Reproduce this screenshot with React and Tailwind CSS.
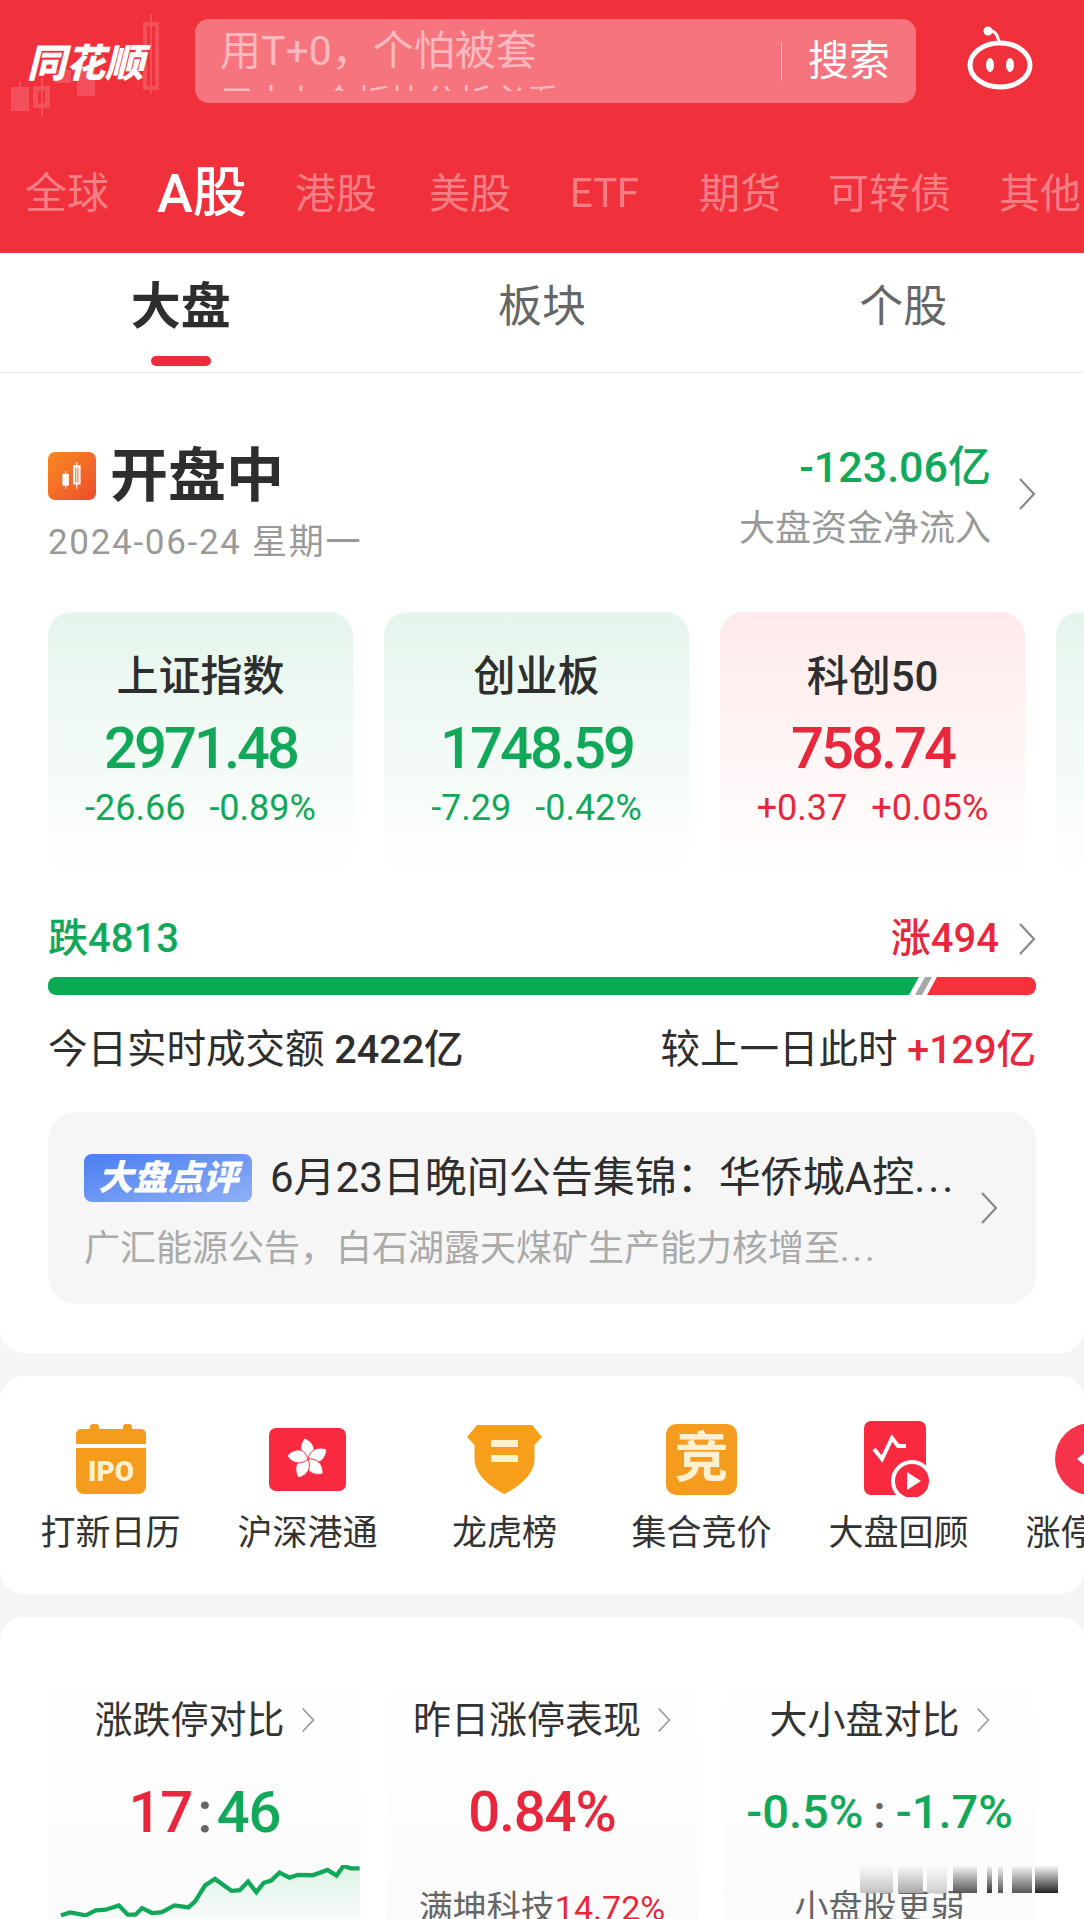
const tabs = [
  { name: "全球", cls: "w-[83px] text-[42px] text-white/40" },
  { name: "A股", cls: "w-[89px] text-[54px] font-medium text-white" },
  { name: "港股", cls: "w-[82px] text-[41px] text-white/40" },
  { name: "美股", cls: "w-[82px] text-[41px] ml-[3px] text-white/40" },
  { name: "ETF", cls: "w-[70px] text-[40px] mx-[10px] text-white/40" },
  { name: "期货", cls: "w-[80px] text-[41px] text-white/40" },
  { name: "可转债", cls: "w-[122px] text-[41px] text-white/40" },
  { name: "其他", cls: "w-[84px] text-[41px] text-white/40" },
];

const indexCards = [
  { title: "上证指数", value: "2971.48", a: "-26.66", b: "-0.89%", up: false },
  { title: "创业板", value: "1748.59", a: "-7.29", b: "-0.42%", up: false },
  { title: "科创50", value: "758.74", a: "+0.37", b: "+0.05%", up: true },
];

const linePoints =
  "60,352 88,343 135,352 165,337 195,335 235,322 262,350 285,350 305,330 335,345 365,342 403,322 445,328 465,310 495,262 525,242 575,278 600,276 625,250 650,282 672,254 695,247 720,223 750,238 775,230 820,231 865,215 892,232 913,203 935,210 962,210";

const Chevron = ({ className }) => (
  <svg viewBox="0 0 18 34" fill="none" stroke="currentColor" strokeWidth="2.2" className={className}>
    <path d="M2 2 L16 17 L2 32" />
  </svg>
);

const Candles = () => (
  <svg viewBox="0 0 160 125" className="absolute left-0 top-0 h-[125px] w-[160px]" fill="#fff">
    <g opacity="0.16">
      <rect x="11" y="87" width="18" height="24" />
      <rect x="19" y="82" width="2" height="6" />
      <path d="M33 86h17v22h-17z M38 91v12h7v-12z" fillRule="evenodd" />
      <rect x="41" y="78" width="2" height="38" />
      <rect x="55" y="70" width="16" height="13" />
      <rect x="77" y="66" width="18" height="30" />
      <path d="M143 22h16v68h-16z M147 26v60h8v-60z" fillRule="evenodd" />
      <rect x="150" y="14" width="2" height="80" />
    </g>
  </svg>
);

const Robot = () => (
  <svg viewBox="0 0 70 64" className="h-[64px] w-[70px]" fill="none">
    <path d="M23 5 C30 4 33 9 34 17" stroke="#fff" strokeWidth="3" />
    <circle cx="23" cy="5" r="4.5" fill="#fff" />
    <ellipse cx="35" cy="39" rx="30" ry="22" stroke="#fff" strokeWidth="5" />
    <ellipse cx="25" cy="39" rx="4" ry="7" fill="#fff" />
    <ellipse cx="45" cy="39" rx="4" ry="7" fill="#fff" />
  </svg>
);

const IpoIcon = () => (
  <svg viewBox="0 0 70 70" className="h-[70px] w-[70px]">
    <rect x="14" y="0" width="9" height="8" rx="3" fill="#f59c1e" />
    <rect x="47" y="0" width="9" height="8" rx="3" fill="#f59c1e" />
    <path d="M0 10 a5 5 0 0 1 5-5 h60 a5 5 0 0 1 5 5 v10 h-70z" fill="#f59c1e" />
    <path d="M0 24 h70 v38 a8 8 0 0 1-8 8 h-54 a8 8 0 0 1-8-8z" fill="#f59c1e" />
    <text x="35" y="57" textAnchor="middle" fontFamily="Roboto, sans-serif" fontWeight="900" fontSize="28" fill="#fff0d0">
      IPO
    </text>
  </svg>
);

const HkIcon = () => (
  <div className="flex h-[63px] w-[77px] items-center justify-center rounded-[7px] bg-[#f9293f]">
    <svg viewBox="-20 -20 40 40" className="h-[44px] w-[44px]" fill="#fff" stroke="#f9293f" strokeWidth="0.8">
      {[0, 72, 144, 216, 288].map((deg) => (
        <path key={deg} transform={`rotate(${deg})`} d="M0 0 C-7 -4 -9 -12 -3 -19 C4 -16 8 -9 4 -4 C3 -3 1 -1 0 0z" />
      ))}
    </svg>
  </div>
);

const ShieldIcon = () => (
  <svg viewBox="0 0 75 70" className="h-[70px] w-[75px]">
    <path d="M10 1 H65 L75 13 L67.5 21 V35 C67.5 52 48 65 37.5 70 C27 65 7.5 52 7.5 35 V21 L0 13z" fill="#f79f1b" />
    <rect x="24" y="16" width="27" height="7" fill="#fff0d0" />
    <rect x="24" y="31" width="27" height="7" fill="#fff0d0" />
  </svg>
);

const JingIcon = () => (
  <div className="flex h-[71px] w-[71px] items-center justify-center rounded-[10px] bg-[#f59c1e] text-[54px] leading-none font-bold text-[#fff0d0]">
    竞
  </div>
);

const ReviewIcon = () => (
  <svg viewBox="0 0 70 76" className="h-[76px] w-[70px]">
    <rect x="0" y="0" width="62" height="74" rx="7" fill="#f9293f" />
    <path d="M10 28 L18 38 L28 17 L34 25 L42 25" fill="none" stroke="#fff" strokeWidth="4" />
    <circle cx="48" cy="60" r="19" fill="#f9293f" stroke="#fff" strokeWidth="4" />
    <path d="M43 51 L57 60 L43 69z" fill="#fff" />
  </svg>
);

const LimitIcon = () => (
  <svg viewBox="0 0 72 72" className="h-[72px] w-[72px] -translate-x-[5px]">
    <circle cx="36" cy="36" r="36" fill="#f5334a" />
    <path d="M22 36 l12 -10 h20 v20 h-20z" fill="#fff" />
  </svg>
);

const shortcuts = [
  { label: "打新日历", icon: <IpoIcon /> },
  { label: "沪深港通", icon: <HkIcon /> },
  { label: "龙虎榜", icon: <ShieldIcon /> },
  { label: "集合竞价", icon: <JingIcon /> },
  { label: "大盘回顾", icon: <ReviewIcon /> },
  { label: "涨停复盘", icon: <LimitIcon /> },
];

const maskBars = [
  "w-[33px] to-[#c4c4c4]",
  "ml-[5px] w-[25px] to-[#a8a8a8]",
  "ml-[4px] w-[20px] to-[#d0d0d0]",
  "ml-[6px] w-[24px] to-[#555]",
  "ml-[10px] w-[5px] to-[#333]",
  "ml-[6px] w-[5px] to-[#555]",
  "ml-[9px] w-[20px] to-[#555]",
  "ml-[3px] w-[23px] to-[#222]",
];

export default function App() {
  return (
    <div className="relative h-[1919px] w-[1084px] overflow-hidden bg-[#f5f5f5] font-['Roboto','Noto_Sans_CJK_SC',sans-serif]">
      <header className="relative h-[253px] bg-[#f0303b]">
        <Candles />
        <div className="relative flex h-[124px] items-start">
          <div className="mt-[36px] ml-[27px] w-[168px] text-[39px] leading-[56px] font-black text-white italic">同花顺</div>
          <div className="mt-[19px] flex h-[84px] w-[721px] items-center rounded-[14px] bg-[#f6747d]">
            <div className="ml-[25px] flex h-full flex-1 flex-col overflow-hidden">
              <div className="mt-[6px] text-[41px] leading-[52px] text-white/50">用T+0，个怕被套</div>
              <div className="mt-[8px] h-[6px] overflow-hidden text-[34px] leading-[34px] whitespace-nowrap text-white/50">三十七个板块分析必看</div>
            </div>
            <div className="h-[39px] w-px bg-white/60"></div>
            <div className="ml-[26px] w-[108px] text-[41px] leading-none text-white">搜索</div>
          </div>
          <div className="mt-[26px] ml-[49px]">
            <Robot />
          </div>
        </div>
        <nav className="relative mt-[25px] flex h-[90px] items-center gap-[49px] pl-[25px] whitespace-nowrap">
          {tabs.map((tab) => (
            <div key={tab.name} className={`shrink-0 leading-none ${tab.cls}`}>
              {tab.name}
            </div>
          ))}
        </nav>
      </header>

      <section className="rounded-b-[24px] bg-white pb-[49px]">
        <div className="grid h-[120px] grid-cols-3 border-b border-[#ececec] text-center">
          <div className="relative pt-[25px] text-[50px] leading-[58px] font-bold text-[#2e2e2e]">
            大盘
            <div className="absolute bottom-[6px] left-[151px] h-[10px] w-[60px] rounded-full bg-[#ec2b3c]"></div>
          </div>
          <div className="pt-[25px] text-[44px] leading-[58px] text-[#666]">板块</div>
          <div className="pt-[25px] text-[44px] leading-[58px] text-[#666]">个股</div>
        </div>

        <div className="flex items-start justify-between pt-[68px] pr-[48px] pl-[48px]">
          <div>
            <div className="flex items-center gap-[14px]">
              <div className="flex h-[48px] w-[48px] items-center justify-center rounded-[7px] bg-linear-to-br from-[#f98a1f] to-[#ec4a2b]">
                <svg viewBox="0 0 28 28" className="h-[30px] w-[30px]" fill="#fff">
                  <rect x="5" y="12" width="6" height="11" />
                  <rect x="7.5" y="9" width="1" height="17" />
                  <path d="M15 4h7v18h-7z M17 6v14h3v-14z" fillRule="evenodd" />
                  <rect x="18" y="1" width="1" height="25" />
                </svg>
              </div>
              <div className="text-[58px] leading-[70px] font-bold text-[#2e2e2e]">开盘中</div>
            </div>
            <div className="mt-[12px] text-[35px] leading-[40px] tracking-[1.7px] text-[#999]">2024-06-24 星期一</div>
          </div>
          <div className="flex items-center gap-[27px]">
            <div className="text-right">
              <div className="text-[43px] leading-[52px] font-medium text-[#12a85a]">-123.06亿</div>
              <div className="mt-[14px] text-[36px] leading-[44px] text-[#999]">大盘资金净流入</div>
            </div>
            <Chevron className="mb-[4px] h-[34px] w-[18px] text-[#888]" />
          </div>
        </div>

        <div className="mt-[49px] flex gap-[31px] overflow-hidden pl-[48px]">
          {indexCards.map((card) => (
            <div
              key={card.title}
              className={`h-[268px] w-[305px] shrink-0 rounded-[24px] bg-linear-to-b to-white pt-[40px] text-center ${card.up ? "from-[#feeaea]" : "from-[#e5f5ec]"}`}
            >
              <div className="text-[42px] leading-[50px] font-medium text-[#2e2e2e]">{card.title}</div>
              <div className={`mt-[13px] text-[58px] leading-[66px] font-medium tracking-[-3px] ${card.up ? "text-[#e8273c]" : "text-[#12a85a]"}`}>
                {card.value}
              </div>
              <div className={`mt-[7px] flex justify-center gap-[24px] text-[36px] leading-[40px] ${card.up ? "text-[#e8273c]" : "text-[#12a85a]"}`}>
                <span>{card.a}</span>
                <span>{card.b}</span>
              </div>
            </div>
          ))}
          <div className="h-[268px] w-[305px] shrink-0 rounded-[24px] bg-linear-to-b from-[#e5f5ec] to-white"></div>
        </div>

        <div className="mt-[35px] px-[48px]">
          <div className="flex items-center justify-between">
            <div className="text-[40px] leading-[48px] font-medium text-[#12a85a]">跌4813</div>
            <div className="flex items-center gap-[19px]">
              <div className="text-[40px] leading-[48px] font-medium text-[#e8273c]">涨494</div>
              <Chevron className="h-[34px] w-[18px] text-[#888]" />
            </div>
          </div>
          <svg viewBox="0 0 988 18" className="mt-[14px] block h-[18px] w-[988px]">
            <path d="M8 0 H871 L861 18 H8 A8 8 0 0 1 0 10 V8 A8 8 0 0 1 8 0z" fill="#0aaa55" />
            <path d="M877 0 H884 L874 18 H867z" fill="#a8a8a8" />
            <path d="M889 0 H980 A8 8 0 0 1 988 8 V10 A8 8 0 0 1 980 18 H879z" fill="#f5323c" />
          </svg>
          <div className="mt-[29px] flex items-center justify-between text-[39.5px] leading-[52px] text-[#2e2e2e]">
            <div>
              今日实时成交额 <span className="font-medium">2422亿</span>
            </div>
            <div>
              较上一日此时 <span className="font-medium text-[#e8273c]">+129亿</span>
            </div>
          </div>
          <div className="mt-[36px] flex h-[192px] items-center justify-between rounded-[28px] bg-[#f6f6f6] pr-[38px] pl-[36px]">
            <div className="w-[880px] pt-[10px]">
              <div className="flex items-center gap-[18px]">
                <div className="flex h-[48px] w-[168px] shrink-0 items-center justify-center rounded-[8px] bg-linear-to-br from-[#4a7df0] to-[#8fb0f5] text-[35px] leading-none font-black text-white italic">
                  大盘点评
                </div>
                <div className="text-[42px] leading-[48px] whitespace-nowrap text-[#2e2e2e]">
                  6月23日晚间公告集锦：华侨城A控<span className="tracking-[3px]">...</span>
                </div>
              </div>
              <div className="mt-[24px] text-[36px] leading-[46px] whitespace-nowrap text-[#aaa]">
                广汇能源公告，白石湖露天煤矿生产能力核增至<span className="tracking-[3px]">...</span>
              </div>
            </div>
            <Chevron className="h-[34px] w-[18px] text-[#888]" />
          </div>
        </div>
      </section>

      <section className="mt-[23px] flex h-[218px] overflow-hidden rounded-[24px] bg-white pt-[45px] pl-[12px]">
        {shortcuts.map((item) => (
          <div key={item.label} className="flex w-[197px] shrink-0 flex-col items-center">
            <div className="flex h-[76px] items-center justify-center">{item.icon}</div>
            <div className="mt-[15px] text-[35px] leading-[44px] whitespace-nowrap text-[#333]">{item.label}</div>
          </div>
        ))}
      </section>

      <section className="mt-[23px] h-[400px] rounded-[24px] bg-white pt-[49px]">
        <div className="grid grid-cols-[313px_312px_313px] gap-[25px] pl-[48px]">
          <div className="relative h-[300px] rounded-[24px] bg-linear-to-b from-white to-[#fafafa] pt-[30px]">
            <div className="flex items-center justify-center gap-[16px] text-[38px] leading-[48px] text-[#333]">
              涨跌停对比
              <Chevron className="h-[26px] w-[14px] text-[#999]" />
            </div>
            <div className="mt-[34px] text-center text-[58px] leading-[68px] font-medium tracking-[-1px]">
              <span className="text-[#e8273c]">17</span>
              <span className="mx-[5px] text-[#666]">:</span>
              <span className="text-[#12a85a]">46</span>
            </div>
            <svg viewBox="24 200 939 157" className="mt-[19px] block h-[52px] w-[313px]">
              <defs>
                <linearGradient id="area" x1="0" y1="0" x2="0" y2="1">
                  <stop offset="0" stopColor="#dff3e7" />
                  <stop offset="1" stopColor="#f6fbf8" />
                </linearGradient>
              </defs>
              <polygon points={`${linePoints} 962,357 60,357`} fill="url(#area)" />
              <polyline points={linePoints} fill="none" stroke="#12a85a" strokeWidth="13" />
            </svg>
          </div>

          <div className="h-[300px] rounded-[24px] bg-linear-to-b from-white to-[#fafafa] pt-[30px]">
            <div className="flex items-center justify-center gap-[16px] text-[38px] leading-[48px] text-[#333]">
              昨日涨停表现
              <Chevron className="h-[26px] w-[14px] text-[#999]" />
            </div>
            <div className="mt-[34px] text-center text-[56px] leading-[68px] font-medium tracking-[-1px] text-[#e8273c]">0.84%</div>
            <div className="mt-[40px] text-center text-[34px] leading-[44px] whitespace-nowrap text-[#666]">
              满坤科技<span className="text-[#e8273c]">14.72%</span>
            </div>
          </div>

          <div className="relative h-[300px] rounded-[24px] bg-linear-to-b from-white to-[#fafafa] pt-[30px]">
            <div className="flex items-center justify-center gap-[16px] text-[38px] leading-[48px] text-[#333]">
              大小盘对比
              <Chevron className="h-[26px] w-[14px] text-[#999]" />
            </div>
            <div className="mt-[38px] text-center text-[47px] leading-[60px] font-medium whitespace-nowrap text-[#12a85a]">
              -0.5%<span className="mx-[10px] text-[#666]">:</span>-1.7%
            </div>
            <div className="mt-[43px] text-center text-[34px] leading-[44px] text-[#666]">小盘股更弱</div>
          </div>
        </div>
      </section>

      <div className="absolute top-[1865px] left-[860px] flex h-[28px] w-[200px]">
        {maskBars.map((bar) => (
          <div key={bar} className={`h-full shrink-0 bg-linear-to-b from-transparent ${bar}`}></div>
        ))}
      </div>
    </div>
  );
}
